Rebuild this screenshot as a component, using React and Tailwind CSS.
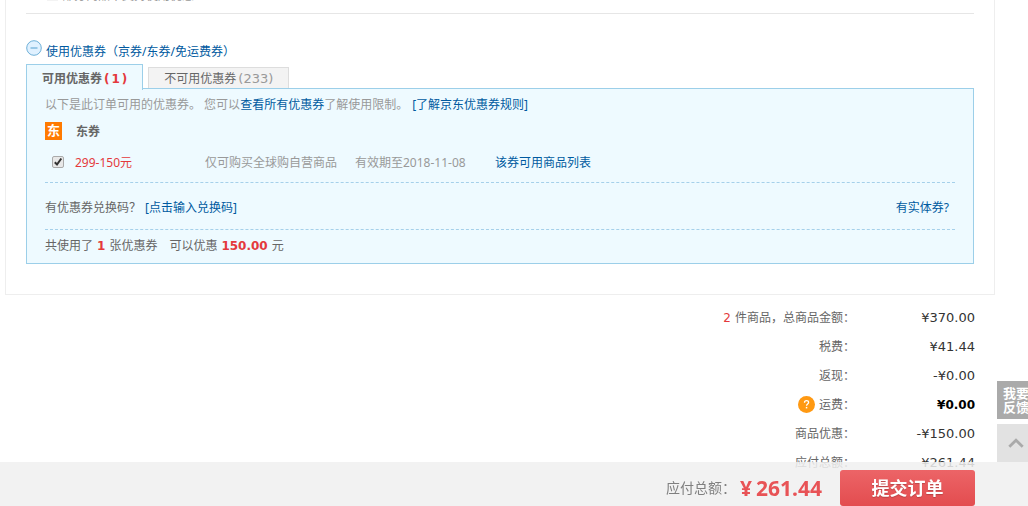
const totals = [
  { label: '件商品，总商品金额：', count: 2, value: '¥370.00' },
  { label: '税费：', value: '¥41.44' },
  { label: '返现：', value: '-¥0.00' },
  { label: '运费：', value: '¥0.00', help: true, strong: true },
  { label: '商品优惠：', value: '-¥150.00' },
  { label: '应付总额：', value: '¥261.44' },
];

function MinusIcon() {
  return (
    <svg className="size-4 shrink-0" viewBox="0 0 16 16" aria-hidden="true">
      <circle cx="8" cy="8" r="7.3" fill="#e0f1ff" stroke="#6fb0d8" />
      <path d="M4.5 8h7" stroke="#5fa6d3" strokeWidth="1.1" />
    </svg>
  );
}

function HelpIcon() {
  return (
    <svg className="size-[17px]" viewBox="0 0 17 17" aria-hidden="true">
      <circle cx="8.5" cy="8.5" r="8.5" fill="#ff9912" />
      <path
        d="M6.5 6.7c0-1.3.8-2 2-2s2.1.7 2.1 1.8c0 1.5-2 1.6-2 3.2"
        fill="none"
        stroke="#fff"
        strokeWidth="1.3"
      />
      <rect x="7.8" y="10.9" width="1.5" height="1.5" fill="#fff" />
    </svg>
  );
}

function CouponPanel() {
  return (
    <section>
      <div className="flex items-end gap-[5px]" role="tablist">
        <button
          type="button"
          role="tab"
          aria-selected="true"
          className="relative z-10 -mb-0.5 flex h-[26px] items-center border border-b-0 border-[#9ccfe9] bg-[#eefaff] px-[15px] pt-0.5 font-bold text-[#666]"
        >
          可用优惠券
          <span className="flex gap-0.5 pl-0.5 font-['DejaVu_Sans',sans-serif] text-[#e4393c]">
            <span>(</span>
            <span>1</span>
            <span>)</span>
          </span>
        </button>
        <button
          type="button"
          role="tab"
          aria-selected="false"
          className="flex h-[21px] items-center border border-b-0 border-[#ddd] bg-[#f3f3f3] px-[15px] pt-0.5 text-[#666]"
        >
          不可用优惠券
          <span className="pl-0.5 font-['DejaVu_Sans',sans-serif] text-[13px] text-[#999]">(233)</span>
        </button>
      </div>

      <div className="border border-[#9ccfe9] bg-[#eefaff] px-[18px] pb-px">
        <p className="pt-0.5 leading-7 text-[#999]">
          以下是此订单可用的优惠券。 您可以
          <a href="#all" className="text-[#005aa0]">查看所有优惠券</a>
          了解使用限制。
          <a href="#rules" className="ml-1 text-[#005aa0]">[了解京东优惠券规则]</a>
        </p>

        <h3 className="flex h-6 items-center gap-[14px] font-bold text-[#666]">
          <span className="flex h-[18px] w-[17px] items-center justify-center bg-[#ff7a00] text-[13px] text-white">
            东
          </span>
          <span className="pt-0.5">东券</span>
        </h3>

        <div className="flex h-[39px] items-center pl-[7px]">
          <label className="flex w-[153px] items-center gap-[11px] text-[#e4393c]">
            <span className="relative mb-0.5 flex size-3">
              <input
                type="checkbox"
                defaultChecked
                className="peer size-3 appearance-none rounded-xs border border-[#aaa] bg-[#e8e8e8]"
              />
              <svg
                className="pointer-events-none absolute inset-0 hidden size-3 peer-checked:block"
                viewBox="0 0 12 12"
                aria-hidden="true"
              >
                <path d="M2.8 6.2l2.2 2.3 4.3-6" fill="none" stroke="#333" strokeWidth="2" />
              </svg>
            </span>
            299-150元
          </label>
          <span className="w-[150px] text-[#999]">仅可购买全球购自营商品</span>
          <span className="w-[140px] text-[#999]">有效期至2018-11-08</span>
          <a href="#goods" className="text-[#005aa0]">该券可用商品列表</a>
        </div>

        <div className="flex h-12 items-center justify-between border-y border-dashed border-[#a5d0ea] pt-[3px] pr-[6px]">
          <p>
            有优惠券兑换码？
            <a href="#code" className="ml-1 text-[#005aa0]">[点击输入兑换码]</a>
          </p>
          <a href="#physical" className="text-[#005aa0]">有实体券?</a>
        </div>

        <p className="flex h-8 items-center gap-1">
          共使用了
          <b className="font-['DejaVu_Sans',sans-serif] text-[#e4393c]">1</b>
          张优惠券
          <span className="ml-2">可以优惠</span>
          <b className="font-['DejaVu_Sans',sans-serif] text-[#e4393c]">150.00</b>
          元
        </p>
      </div>
    </section>
  );
}

export default function App() {
  return (
    <div className="bg-white font-['Noto_Sans','Noto_Sans_CJK_SC',sans-serif] text-xs text-[#666]">
      <main className="mr-[33px] ml-[5px] border border-t-0 border-[#eee] px-5 pb-[30px]">
        <div className="flex h-[13px] items-start gap-1 overflow-hidden pl-[21px] text-[#999]">
          <span className="-mt-[15px] h-4 w-[11px] bg-[#f3f3f3]" />
          <span className="-mt-3 leading-4">部分商品不支持使用优惠</span>
        </div>
        <hr className="border-[#e6e6e6]" />
        <button type="button" className="mt-[26px] flex h-6 items-start gap-1 text-[#005aa0]">
          <MinusIcon />
          <span className="pt-1">使用优惠券（京券/东券/免运费券）</span>
        </button>
        <CouponPanel />
      </main>

      <dl className="mt-2 mr-[53px]">
        {totals.map((row) => (
          <div key={row.label} className="flex h-[29px] items-center justify-end">
            <dt className="flex items-center gap-1">
              {row.count && (
                <span className="font-['DejaVu_Sans',sans-serif] text-[#e4393c]">{row.count}</span>
              )}
              {row.help && <HelpIcon />}
              {row.label}
            </dt>
            <dd
              className={
                row.strong
                  ? "w-[120px] text-right font-['DejaVu_Sans',sans-serif] font-bold text-black"
                  : "w-[120px] text-right font-['DejaVu_Sans',sans-serif] text-[13px] text-[#333]"
              }
            >
              {row.value}
            </dd>
          </div>
        ))}
      </dl>

      <aside className="fixed right-0 bottom-11 flex w-[31px] flex-col gap-[5px]">
        <button
          type="button"
          className="h-[38px] overflow-hidden bg-[#aaa] pl-[6px] text-left text-[13px] leading-[14px] font-bold whitespace-nowrap text-white"
        >
          我要
          <br />
          反馈
        </button>
        <button
          type="button"
          aria-label="返回顶部"
          className="flex h-[38px] items-center justify-end bg-[#e2e2e2] pr-1"
        >
          <svg className="h-[10px] w-4" viewBox="0 0 16 10" aria-hidden="true">
            <path d="M1.3 8.7L8 2.2l6.7 6.5" fill="none" stroke="#aaa" strokeWidth="2.8" />
          </svg>
        </button>
      </aside>

      <footer className="fixed inset-x-0 bottom-0 flex h-11 items-end justify-end bg-[#f0f0f0]/85 pr-[53px]">
        <p className="flex h-9 items-center text-sm text-[#808080]">
          应付总额：
          <strong className="flex gap-1 pr-[18px] pl-1 text-[21px] text-[#e85356]">
            <span>¥</span>
            <span>261.44</span>
          </strong>
        </p>
        <button
          type="button"
          className="h-9 w-[135px] rounded-[3px] bg-linear-to-b from-[#ec6467] to-[#e34c4f] text-lg font-bold text-white text-shadow-xs"
        >
          提交订单
        </button>
      </footer>
    </div>
  );
}
